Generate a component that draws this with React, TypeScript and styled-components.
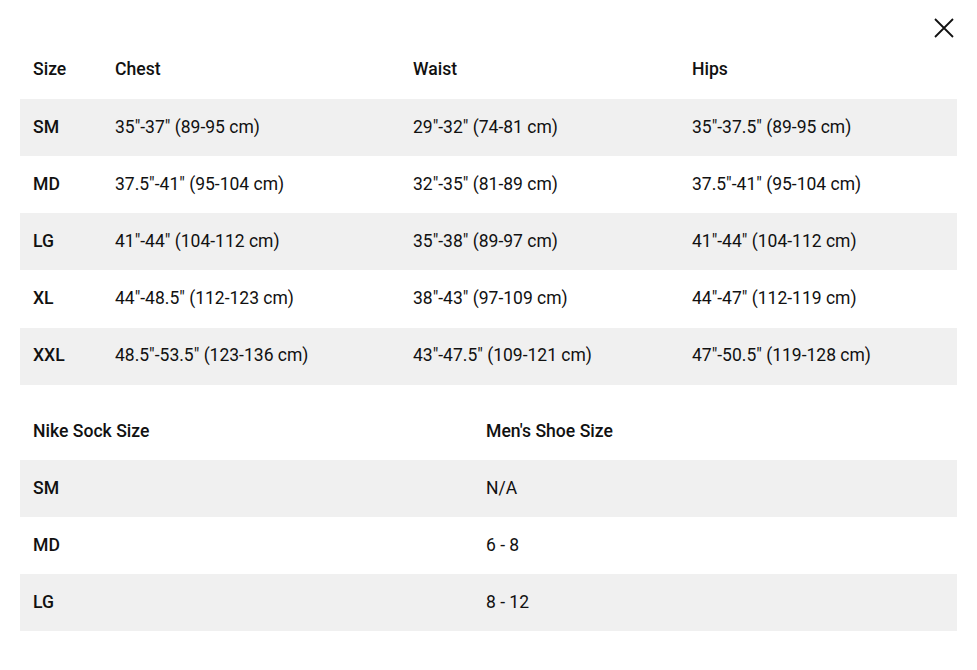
import React from "react";
import styled, { createGlobalStyle } from "styled-components";

const Global = createGlobalStyle`
  html, body { margin: 0; padding: 0; background: #fff; }
  body { font-family: Roboto, "Helvetica Neue", Arial, sans-serif; color: #111; }
`;

const Modal = styled.div`
  position: relative;
  width: 977px;
  height: 670px;
  box-sizing: border-box;
  padding: 41.6px 20px 0;
  background: #fff;
`;

const Close = styled.button`
  position: absolute;
  top: 16px;
  right: 21px;
  width: 24px;
  height: 24px;
  padding: 0;
  border: 0;
  background: transparent;
  display: flex;
  align-items: center;
  justify-content: center;
`;

const Table = styled.div<{ $cols: string; $gap?: number }>`
  display: grid;
  grid-template-columns: ${(p) => p.$cols};
  grid-auto-rows: 57.2px;
  margin-top: ${(p) => p.$gap ?? 0}px;
`;

const Row = styled.div<{ $shade?: boolean }>`
  display: contents;
  & > div {
    background: ${(p) => (p.$shade ? "#f0f0f0" : "transparent")};
  }
`;

const Cell = styled.div<{ $head?: boolean; $bold?: boolean }>`
  display: flex;
  align-items: center;
  padding: 0 0 1.5px 13px;
  font-size: ${(p) => (p.$head || p.$bold ? "17.6px" : "17.5px")};
  line-height: 24px;
  font-weight: ${(p) => (p.$head || p.$bold ? 500 : 400)};
  color: #111;
  white-space: nowrap;
`;

const sizes = [
  ["SM", '35"-37" (89-95 cm)', '29"-32" (74-81 cm)', '35"-37.5" (89-95 cm)'],
  ["MD", '37.5"-41" (95-104 cm)', '32"-35" (81-89 cm)', '37.5"-41" (95-104 cm)'],
  ["LG", '41"-44" (104-112 cm)', '35"-38" (89-97 cm)', '41"-44" (104-112 cm)'],
  ["XL", '44"-48.5" (112-123 cm)', '38"-43" (97-109 cm)', '44"-47" (112-119 cm)'],
  ["XXL", '48.5"-53.5" (123-136 cm)', '43"-47.5" (109-121 cm)', '47"-50.5" (119-128 cm)'],
];

const socks = [
  ["SM", "N/A"],
  ["MD", "6 - 8"],
  ["LG", "8 - 12"],
];

export default function App() {
  return (
    <>
      <Global />
      <Modal>
        <Close aria-label="Close">
          <svg width="22" height="22" viewBox="0 0 22 22">
            <path d="M2 2 L20 20 M20 2 L2 20" stroke="#111" strokeWidth="1.8" fill="none" />
          </svg>
        </Close>
        <Table $cols="82px 298px 279px 1fr">
          <Row>
            <Cell $head>Size</Cell>
            <Cell $head>Chest</Cell>
            <Cell $head>Waist</Cell>
            <Cell $head>Hips</Cell>
          </Row>
          {sizes.map((r, i) => (
            <Row key={r[0]} $shade={i % 2 === 0}>
              <Cell $bold>{r[0]}</Cell>
              <Cell>{r[1]}</Cell>
              <Cell>{r[2]}</Cell>
              <Cell>{r[3]}</Cell>
            </Row>
          ))}
        </Table>
        <Table $cols="453px 1fr" $gap={18}>
          <Row>
            <Cell $head>Nike Sock Size</Cell>
            <Cell $head>Men's Shoe Size</Cell>
          </Row>
          {socks.map((r, i) => (
            <Row key={r[0]} $shade={i % 2 === 0}>
              <Cell $bold>{r[0]}</Cell>
              <Cell>{r[1]}</Cell>
            </Row>
          ))}
        </Table>
      </Modal>
    </>
  );
}
